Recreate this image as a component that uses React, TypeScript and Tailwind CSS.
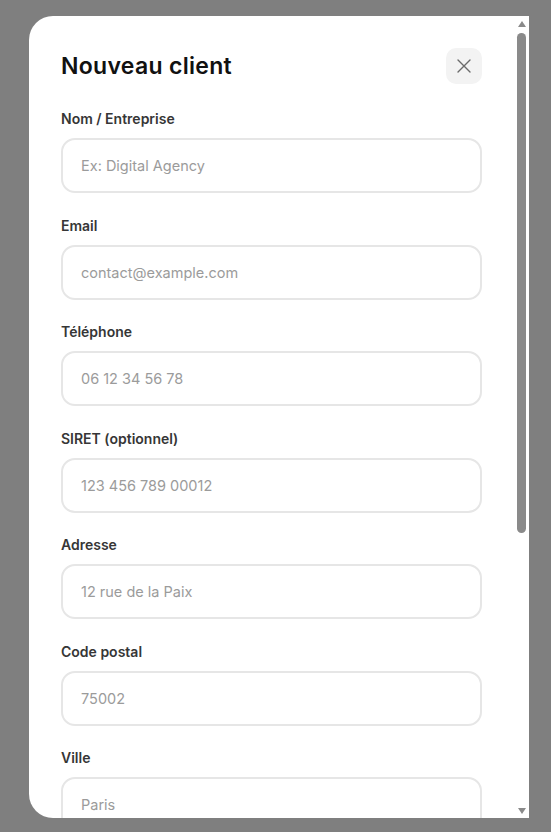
import React from "react";

const fields = [
  { label: "Nom / Entreprise", placeholder: "Ex: Digital Agency" },
  { label: "Email", placeholder: "contact@example.com" },
  { label: "Téléphone", placeholder: "06 12 34 56 78" },
  { label: "SIRET (optionnel)", placeholder: "123 456 789 00012" },
  { label: "Adresse", placeholder: "12 rue de la Paix" },
  { label: "Code postal", placeholder: "75002" },
  { label: "Ville", placeholder: "Paris" },
];

function Scrollbar() {
  return (
    <div className="flex w-[15px] shrink-0 flex-col items-center bg-white">
      <div className="mt-[5px] h-0 w-0 border-x-[4.5px] border-b-[6px] border-x-transparent border-b-[#8a8a8a]" />
      <div className="mt-[6px] h-[500px] w-[9px] rounded-full bg-[#8a8a8a]" />
      <div className="flex-1" />
      <div className="mb-[4px] h-0 w-0 border-x-[4.5px] border-t-[6px] border-x-transparent border-t-[#8a8a8a]" />
    </div>
  );
}

export default function App() {
  return (
    <div className="h-[832px] w-full bg-[#7f7f7f] pl-[29px] pt-[16px] font-['Inter',sans-serif]">
      <div className="flex h-[802px] w-[500px] overflow-hidden rounded-l-[24px] bg-white">
        <div className="flex-1 overflow-hidden px-8 pt-8">
          <div className="mb-[25px] flex h-9 items-center justify-between">
            <h2 className="text-[23px] font-semibold tracking-[0.3px] text-[#111]">Nouveau client</h2>
            <button className="flex h-9 w-9 items-center justify-center rounded-[10px] bg-[#f3f3f3]">
              <svg width="16" height="16" viewBox="0 0 16 16" fill="none" stroke="#6b6b6b" strokeWidth="1.4" strokeLinecap="round">
                <path d="M2 2l12 12M14 2L2 14" />
              </svg>
            </button>
          </div>
          <div className="flex flex-col gap-[22.5px]">
            {fields.map((f) => (
              <div key={f.label} className="flex flex-col">
                <label className="mb-[9px] text-[14px] leading-5 font-semibold text-[#363636]">{f.label}</label>
                <input
                  placeholder={f.placeholder}
                  className="h-[55px] w-full rounded-[14px] border-2 border-[#e6e6e6] px-[18px] text-[14.5px] text-[#333] outline-none placeholder:text-[#9b9b9b]"
                />
              </div>
            ))}
          </div>
        </div>
        <Scrollbar />
      </div>
    </div>
  );
}
